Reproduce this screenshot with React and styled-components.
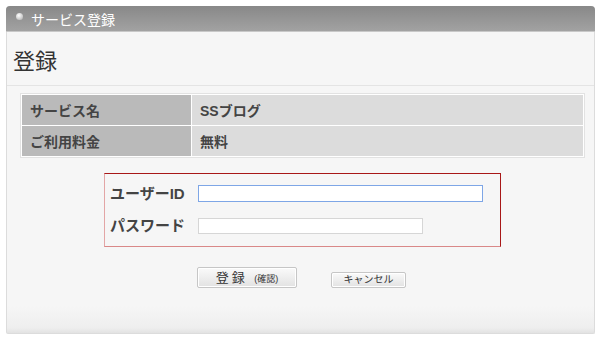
import React from "react";
import styled, { createGlobalStyle } from "styled-components";

const GlobalStyle = createGlobalStyle`
  body {
    margin: 0;
    background: #ffffff;
    font-family: "Liberation Sans", "Noto Sans CJK JP", sans-serif;
  }
`;

const Page = styled.div`
  padding: 6px 5px 5px 6px;
`;

const Panel = styled.div`
  width: 589px;
  height: 328px;
  box-sizing: border-box;
  background: linear-gradient(#f6f6f6 0, #f6f6f6 300px, #eeeeee 322px, #e2e2e2 100%);
  border: 1px solid #dcdcdc;
  border-top: none;
  border-radius: 4px 4px 2px 2px;
  display: flex;
  flex-direction: column;
`;

const TitleBar = styled.div`
  height: 26px;
  margin: 0 -1px;
  background: linear-gradient(#888888, #a2a2a2);
  border-bottom: 1px solid #c8c8c8;
  border-radius: 4px 4px 0 0;
  display: flex;
  align-items: center;
  gap: 8px;
  padding-left: 10px;
  color: #ffffff;
  font-size: 14px;
  box-sizing: border-box;
`;

const Bullet = styled.span`
  width: 7px;
  height: 7px;
  border-radius: 50%;
  background: radial-gradient(circle at 40% 35%, #ffffff, #c4c4c4 70%);
  margin-top: -4px;
`;

const Heading = styled.h1`
  margin: 0;
  padding: 17px 0 10px 6px;
  font-size: 22px;
  font-weight: normal;
  color: #333333;
  line-height: 26px;
  border-bottom: 1px solid #e4e4e4;
`;

const InfoTable = styled.div`
  margin: 7px 9px 0 13px;
  border: 1px solid #e2e2e2;
  padding: 1px;
  display: grid;
  grid-template-columns: 169px 1fr;
  gap: 1px;
  background: #ffffff;
`;

const Cell = styled.div`
  height: 30px;
  display: flex;
  align-items: center;
  padding-left: 8px;
  background: ${(p) => (p.$head ? "#bababa" : "#dcdcdc")};
  color: #444444;
  font-size: 14px;
  font-weight: bold;
`;

const FormBox = styled.div`
  margin: 15px 0 0 97px;
  width: 397px;
  height: 74px;
  box-sizing: border-box;
  border-top: 1px solid #a81818;
  border-right: 1px solid #a81818;
  border-left: 1px solid #e3a6a6;
  border-bottom: 1px solid #d98888;
  padding: 11px 0 0 5px;
  display: grid;
  grid-template-columns: 88px auto;
  grid-auto-rows: 17px;
  row-gap: 15px;
  align-content: start;
  align-items: center;
  justify-content: start;
`;

const Label = styled.label`
  font-size: 15px;
  font-weight: bold;
  color: #444444;
  line-height: 17px;
`;

const Input = styled.input`
  box-sizing: border-box;
  width: ${(p) => p.$w}px;
  height: ${(p) => (p.$focus ? 17 : 16)}px;
  margin: 0;
  padding: 0 3px;
  background: #ffffff;
  border: 1px solid ${(p) => (p.$focus ? "#7ea6e6" : "#d6d6d6")};
  outline: none;
  font-size: 12px;
`;

const Buttons = styled.div`
  display: flex;
  align-items: flex-end;
  gap: 34px;
  margin: 20px 0 0 190px;
`;

const Button = styled.button`
  box-sizing: border-box;
  width: ${(p) => p.$w}px;
  height: ${(p) => p.$h}px;
  padding: 0;
  margin: 0;
  border: 1px solid #c6c6c6;
  border-radius: 2px;
  background: linear-gradient(#fafafa, #e2e2e2);
  box-shadow: inset 0 0 0 1px #ffffff;
  color: #333333;
  font-family: "Liberation Sans", "Noto Sans CJK JP", sans-serif;
  font-size: ${(p) => p.$fs}px;
  line-height: 1;
  letter-spacing: ${(p) => (p.$spread ? "3px" : "0")};
`;

const Small = styled.span`
  font-size: 9px;
  letter-spacing: 0;
`;

export default function App() {
  return (
    <>
      <GlobalStyle />
      <Page>
        <Panel>
          <TitleBar>
            <Bullet />
            サービス登録
          </TitleBar>
          <Heading>登録</Heading>
          <InfoTable>
            <Cell $head>サービス名</Cell>
            <Cell>SSブログ</Cell>
            <Cell $head>ご利用料金</Cell>
            <Cell>無料</Cell>
          </InfoTable>
          <FormBox>
            <Label>ユーザーID</Label>
            <Input $w={285} $focus defaultValue="" />
            <Label>パスワード</Label>
            <Input $w={225} type="password" />
          </FormBox>
          <Buttons>
            <Button $w={100} $h={21} $fs={13} $spread>
              登録 <Small>(確認)</Small>
            </Button>
            <Button $w={75} $h={16} $fs={10}>
              キャンセル
            </Button>
          </Buttons>
        </Panel>
      </Page>
    </>
  );
}
